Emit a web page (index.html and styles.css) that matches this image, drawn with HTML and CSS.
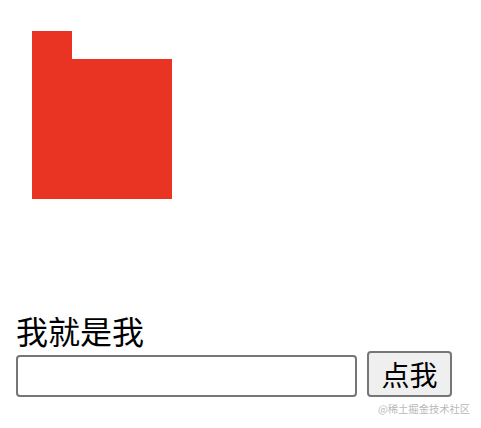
FILE: index.html
```html
<!DOCTYPE html>
<html lang="zh">
<head>
<meta charset="utf-8">
<link rel="stylesheet" href="styles.css">
</head>
<body>
<div class="page">
  <div class="folder">
    <div class="tab"></div>
    <div class="box"></div>
  </div>
  <div class="label">我就是我</div>
  <div class="row">
    <input class="field" type="text">
    <button class="btn">点我</button>
  </div>
</div>
<div class="watermark">@稀土掘金技术社区</div>
</body>
</html>
```
FILE: styles.css
```css
html, body {
  margin: 0;
  padding: 0;
  background: #ffffff;
}
body {
  width: 481px;
  height: 428px;
  position: relative;
  overflow: hidden;
  font-family: "Noto Sans CJK SC", "Noto Sans", sans-serif;
}
.page {
  display: flex;
  flex-direction: column;
  padding-left: 16px;
}
.folder {
  margin-top: 31px;
  margin-left: 16px;
  display: flex;
  flex-direction: column;
}
.tab {
  width: 40px;
  height: 28px;
  background: #e93323;
}
.box {
  width: 140px;
  height: 140px;
  background: #e93323;
}
.label {
  margin-top: 115px;
  font-size: 32px;
  line-height: 32px;
  height: 34px;
  color: #000;
}
.row {
  margin-top: 3px;
  display: flex;
  align-items: flex-end;
}
.field {
  box-sizing: border-box;
  width: 341px;
  height: 42px;
  margin: 0;
  border: 2px solid #767676;
  border-radius: 4px;
  background: #fff;
  padding: 0 4px;
  font-size: 20px;
}
.btn {
  box-sizing: border-box;
  margin: 0 0 0 10px;
  width: 85px;
  height: 46px;
  border: 2px solid #767676;
  border-radius: 4px;
  background: #efefef;
  font-family: "Noto Sans CJK SC", sans-serif;
  font-size: 28px;
  line-height: 28px;
  color: #000;
  padding: 0;
}
.watermark {
  position: absolute;
  left: 378px;
  top: 402px;
  font-size: 10.3px;
  line-height: 14px;
  color: #b9b9b9;
}
```
